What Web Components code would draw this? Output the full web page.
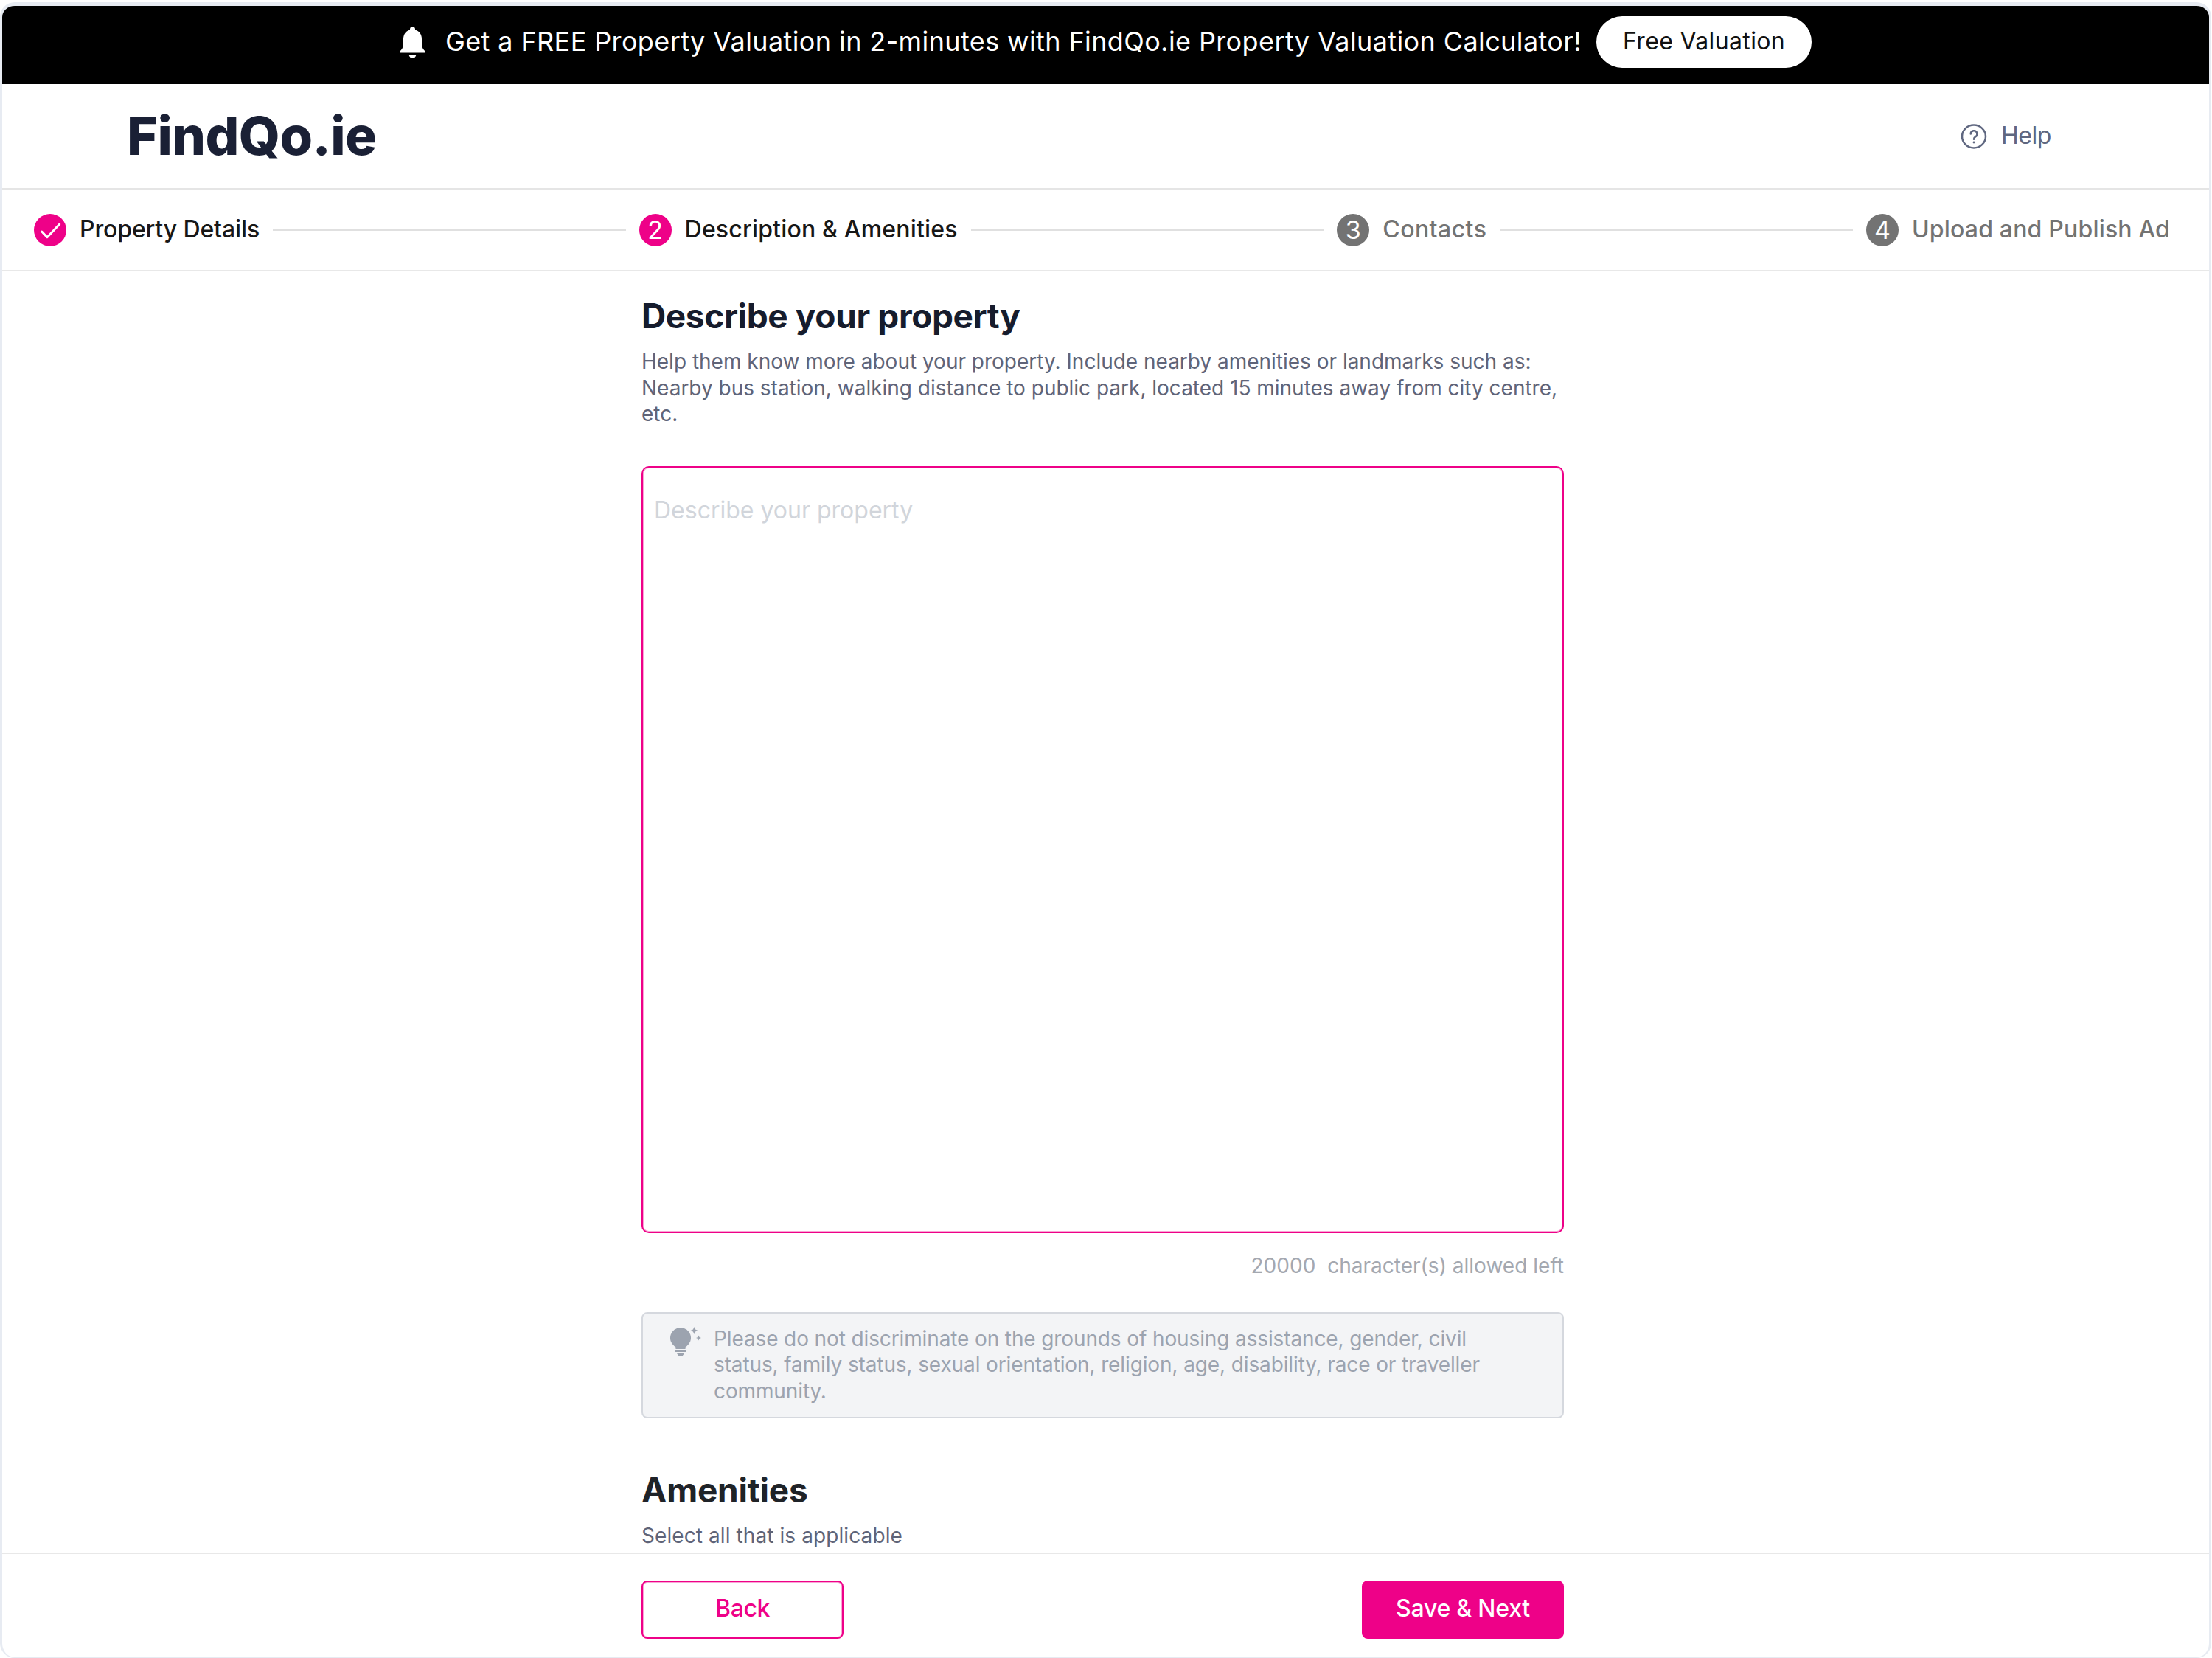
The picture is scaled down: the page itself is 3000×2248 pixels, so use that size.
<!DOCTYPE html>
<html lang="en">
<head>
<meta charset="utf-8">
<title>FindQo.ie</title>
<style>
  html, body { margin: 0; height: 100%; background: #fff; }
  body { font-family: Inter, "Liberation Sans", sans-serif; }
</style>
</head>
<body>
<app-frame>
  <promo-banner action="Free Valuation">Get a FREE Property Valuation in 2-minutes with FindQo.ie Property Valuation Calculator!</promo-banner>
  <site-header></site-header>
  <step-bar>
    <step-item state="done" style="letter-spacing:-.13px">Property Details</step-item>
    <step-item state="active" num="2" style="letter-spacing:.18px">Description &amp; Amenities</step-item>
    <step-item num="3" style="letter-spacing:.43px">Contacts</step-item>
    <step-item num="4" last style="letter-spacing:.18px">Upload and Publish Ad</step-item>
  </step-bar>
  <form-body>
    <describe-section></describe-section>
    <amenities-section></amenities-section>
  </form-body>
  <form-footer></form-footer>
</app-frame>

<script>
const PINK = "#ee0188"

class AppFrame extends HTMLElement {
  constructor() {
    super()
    this.attachShadow({mode: "open"})
    this.shadowRoot.innerHTML = `
      <style>
        :host {
          display: block;
          height: 100vh;
          box-sizing: border-box;
          padding: 3px 1px 0 0;
        }
        .frame {
          height: 100%;
          box-sizing: border-box;
          display: flex;
          flex-direction: column;
          overflow: hidden;
          background: #fff;
          border: solid #e7ebf2;
          border-width: 5px 3px 1px 3px;
          border-radius: 20px;
        }
      </style>
      <div class="frame"><slot></slot></div>
    `
  }
}

class PromoBanner extends HTMLElement {
  constructor() {
    super()
    this.attachShadow({mode: "open"})
    this.shadowRoot.innerHTML = `
      <style>
        :host {
          display: flex;
          flex: none;
          justify-content: center;
          gap: 20px;
          height: 106px;
          box-sizing: border-box;
          padding-top: 14px;
          background: #000;
          color: #fff;
        }
        svg { width: 35px; height: 43px; margin: 14px 7px 0 0; fill: #fff; }
        .text {
          font-size: 36px;
          line-height: 68px;
          letter-spacing: .39px;
          white-space: nowrap;
        }
        .action {
          height: 70px;
          box-sizing: border-box;
          padding: 0 36px;
          border-radius: 35px;
          background: #fff;
          color: #111;
          font-size: 32px;
          line-height: 68px;
          letter-spacing: .35px;
          white-space: nowrap;
        }
      </style>
      <svg viewBox="0 0 35 43"><path d="M17.5 0c-2 0-3.500 1.500-3.500 3.500v1C8 6 5 11 5 17v7c0 4-2 7-5 10v1.500h35V34c-3-3-5-6-5-10v-7c0-6-3-11-9-12.500v-1C21 1.500 19.500 0 17.500 0zM12.500 38.500h10c-1 3-3 4.500-5 4.500s-4-1.500-5-4.500z"/></svg>
      <span class="text"><slot></slot></span>
      <span class="action">${this.getAttribute("action")}</span>
    `
  }
}

class SiteHeader extends HTMLElement {
  constructor() {
    super()
    this.attachShadow({mode: "open"})
    this.shadowRoot.innerHTML = `
      <style>
        :host {
          display: flex;
          flex: none;
          align-items: center;
          justify-content: space-between;
          height: 143px;
          box-sizing: border-box;
          padding: 0 214px 0 169px;
          border-bottom: 2px solid #e5e5e5;
        }
        .logo {
          padding-bottom: 3px;
          font-size: 72px;
          font-weight: 800;
          letter-spacing: -.6px;
          color: #1a2035;
        }
        .help {
          display: flex;
          align-items: center;
          gap: 19px;
          font-size: 32px;
          letter-spacing: -.45px;
          color: #5f6780;
        }
        .help span { padding-bottom: 2px; }
        svg { width: 36px; height: 34px; fill: none; stroke: #5f6780; stroke-width: 2.5; }
      </style>
      <div class="logo">FindQo.ie</div>
      <div class="help">
        <svg viewBox="0 0 36 34">
          <ellipse cx="18" cy="17" rx="16" ry="15.500"/>
          <path d="M13.800 13.500a4.300 4.300 0 1 1 6.400 3.800c-1.500.8-2.200 1.600-2.200 3.400" stroke-linecap="round"/>
          <circle cx="18" cy="25" r="1.400" fill="#5f6780" stroke="none"/>
        </svg>
        <span>Help</span>
      </div>
    `
  }
}

class StepBar extends HTMLElement {
  constructor() {
    super()
    this.attachShadow({mode: "open"})
    this.shadowRoot.innerHTML = `
      <style>
        :host {
          display: flex;
          flex: none;
          align-items: center;
          gap: 18px;
          height: 111px;
          box-sizing: border-box;
          padding: 0 53px 0 43px;
          border-bottom: 2px solid #e8e8e8;
        }
      </style>
      <slot></slot>
    `
  }
}

class StepItem extends HTMLElement {
  constructor() {
    super()
    const state = this.getAttribute("state")
    const mark = state == "done"
      ? `<svg viewBox="0 0 44 44" width="44" height="44"><path d="M10.700 24l7.300 7.700L34.700 14" fill="none" stroke="#fff" stroke-width="3" stroke-linecap="round" stroke-linejoin="round"/></svg>`
      : this.getAttribute("num")
    this.attachShadow({mode: "open"})
    this.shadowRoot.innerHTML = `
      <style>
        :host {
          display: flex;
          align-items: center;
          gap: 18px;
          font-size: 32px;
          font-weight: 500;
          color: #737373;
        }
        :host(:not([last])) { flex: 1 1 auto; }
        :host([state]) { color: #171717; }
        .mark {
          flex: none;
          width: 44px;
          height: 44px;
          border-radius: 50%;
          background: #737373;
          color: #fff;
          font-weight: 400;
          font-size: 34px;
          line-height: 44px;
          letter-spacing: 0;
          text-align: center;
        }
        :host([state]) .mark { background: ${PINK}; }
        .label { padding-bottom: 3px; white-space: nowrap; }
        .line { flex: 1; height: 2px; background: #e0e0e0; }
        :host([last]) .line { display: none; }
      </style>
      <div class="mark">${mark}</div>
      <div class="label"><slot></slot></div>
      <div class="line"></div>
    `
  }
}

class FormBody extends HTMLElement {
  constructor() {
    super()
    this.attachShadow({mode: "open"})
    this.shadowRoot.innerHTML = `
      <style>
        :host {
          display: block;
          flex: 1;
          min-height: 0;
          overflow: hidden;
          box-sizing: border-box;
          padding: 30px 0 0 867px;
        }
        .col { width: 1251px; }
      </style>
      <div class="col"><slot></slot></div>
    `
  }
}

class DescribeSection extends HTMLElement {
  constructor() {
    super()
    this.attachShadow({mode: "open"})
    this.shadowRoot.innerHTML = `
      <style>
        :host { display: block; }
        h2 {
          margin: 0 0 15px;
          font-size: 46px;
          line-height: 60px;
          font-weight: 700;
          letter-spacing: -.38px;
          color: #161c2d;
        }
        p {
          margin: 0;
          font-size: 28px;
          line-height: 35.500px;
          letter-spacing: -.01px;
          color: #5f6478;
        }
        .box {
          height: 1040px;
          box-sizing: border-box;
          margin-top: 52px;
          padding: 34px 15px;
          border: 2px solid ${PINK};
          border-radius: 10px;
          box-shadow: inset 0 0 0 1px rgba(238, 1, 136, .35);
          font-size: 32px;
          line-height: 48px;
          color: #d1d5db;
        }
        .count {
          margin-top: 26px;
          font-size: 28px;
          line-height: 36px;
          letter-spacing: .02px;
          text-align: right;
          color: #a4a8b0;
        }
        .note {
          display: flex;
          gap: 17px;
          margin-top: 45px;
          box-sizing: border-box;
          height: 144px;
          padding: 17px 70px 0 37px;
          background: #f3f4f6;
          border: 2px solid #d5d8de;
          border-radius: 8px;
          font-size: 28px;
          line-height: 35.500px;
          letter-spacing: -.12px;
          color: #9ca3af;
        }
        svg { flex: none; width: 42px; height: 40px; margin-top: 1px; fill: #9ca3af; }
      </style>
      <h2>Describe your property</h2>
      <p>Help them know more about your property. Include nearby amenities or landmarks such as: Nearby bus station, walking distance to public park, located 15 minutes away from city centre, etc.</p>
      <div class="box">Describe your property</div>
      <div class="count">20000&nbsp; character(s) allowed left</div>
      <div class="note">
        <svg viewBox="0 0 42 40">
          <path d="M14 1a14 14 0 0 1 8 25.500c-1 .8-1.500 2-1.500 3.500h-13c0-1.500-.5-2.700-1.500-3.500A14 14 0 0 1 14 1z"/>
          <path d="M7 31.500h14v2.500H7zM9 36h10l-2.500 3.500a3 3 0 0 1-5 0z"/>
          <path d="M32.500 0l1.500 3.500 3.500 1.500-3.500 1.500-1.500 3.500-1.500-3.500-3.500-1.500 3.500-1.500zM38.500 11.500l1 2.500 2.500 1-2.500 1-1 2.500-1-2.500-2.500-1 2.500-1z"/>
        </svg>
        <div>Please do not discriminate on the grounds of housing assistance, gender, civil status, family status, sexual orientation, religion, age, disability, race or traveller community.</div>
      </div>
    `
  }
}

class AmenitiesSection extends HTMLElement {
  constructor() {
    super()
    this.attachShadow({mode: "open"})
    this.shadowRoot.innerHTML = `
      <style>
        :host { display: block; padding-top: 67px; }
        h2 {
          margin: 0 0 14px;
          font-size: 46px;
          line-height: 60px;
          font-weight: 700;
          letter-spacing: -.2px;
          color: #1f2328;
        }
        p {
          margin: 0;
          font-size: 28px;
          line-height: 36px;
          letter-spacing: .09px;
          color: #5f6478;
        }
      </style>
      <h2>Amenities</h2>
      <p>Select all that is applicable</p>
    `
  }
}

class FormFooter extends HTMLElement {
  constructor() {
    super()
    this.attachShadow({mode: "open"})
    this.shadowRoot.innerHTML = `
      <style>
        :host {
          display: block;
          flex: none;
          height: 142px;
          box-sizing: border-box;
          padding: 36px 0 0 867px;
          border-top: 2px solid #e8e8e8;
        }
        .row {
          display: flex;
          justify-content: space-between;
          width: 1251px;
        }
        .btn {
          width: 274px;
          height: 79px;
          box-sizing: border-box;
          border: 2px solid ${PINK};
          border-radius: 8px;
          font-size: 32px;
          font-weight: 500;
          line-height: 72px;
          text-align: center;
        }
        .back {
          color: ${PINK};
          letter-spacing: -.39px;
          box-shadow: inset 0 0 0 1px rgba(238, 1, 136, .35);
        }
        .next { background: ${PINK}; color: #fff; letter-spacing: -.23px; }
      </style>
      <div class="row">
        <div class="btn back">Back</div>
        <div class="btn next">Save &amp; Next</div>
      </div>
    `
  }
}

customElements.define("app-frame", AppFrame)
customElements.define("promo-banner", PromoBanner)
customElements.define("site-header", SiteHeader)
customElements.define("step-bar", StepBar)
customElements.define("step-item", StepItem)
customElements.define("form-body", FormBody)
customElements.define("describe-section", DescribeSection)
customElements.define("amenities-section", AmenitiesSection)
customElements.define("form-footer", FormFooter)
</script>
</body>
</html>
